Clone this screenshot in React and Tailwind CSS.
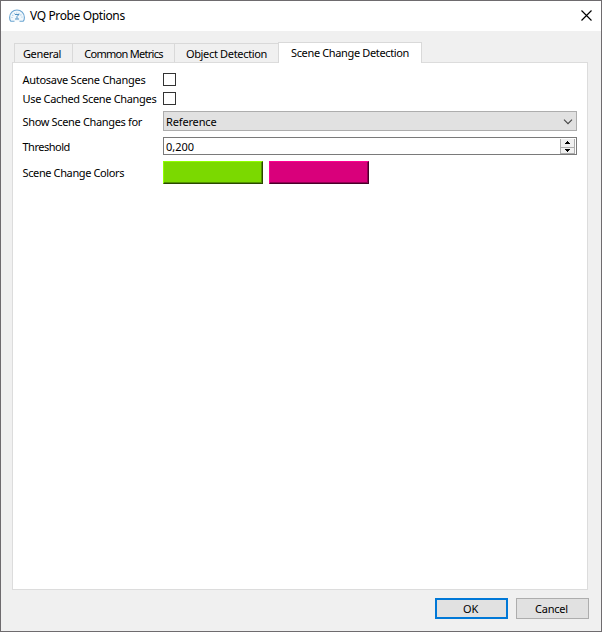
import React from 'react';

const tabs = [
    { name: 'General', style: 'w-[58px] tracking-[-0.35px] pr-[3px]' },
    { name: 'Common Metrics', style: 'w-[102px] tracking-[-0.72px]' },
    { name: 'Object Detection', style: 'w-[104px] tracking-[-0.33px]' },
];

const GaugeIcon = () => (
    <svg width="16" height="14" viewBox="0 0 16 14" fill="none" className="shrink-0">
        <path d="M1.7 12.3C.9 11 .6 9.8.6 8.4a7.4 7.4 0 0 1 14.8 0c0 1.400-.3 2.600-1.100 3.900" fill="#f2f8fc" stroke="#6ba5d1" strokeWidth="1.1" />
        <path d="M3 9A5 5 0 0 1 13 9" stroke="#a5cae4" strokeWidth="1.2" strokeDasharray="1 1.3" />
        <path d="M6 5.500h4L8 7.500v2M6 10h4" stroke="#4d8fc1" strokeWidth="1" />
        <path d="M1.500 12.300h4M10.500 12.300h4" stroke="#6ba5d1" strokeWidth="1.1" />
    </svg>
);

const CloseIcon = () => (
    <svg width="11" height="11" viewBox="0 0 11 11" className="shrink-0">
        <path d="M.5.5l10 10M10.5.5l-10 10" stroke="#000" strokeWidth="1.15" />
    </svg>
);

const Checkbox = () => (
    <span role="checkbox" aria-checked="false" className="block size-[13px] border border-[#333] bg-white" />
);

const Row = ({ label, className, labelStyle = '', children }) => (
    <div className={`flex items-center ${className}`}>
        <span className={`w-[141px] shrink-0 pl-[0.5px] ${labelStyle}`}>{label}</span>
        {children}
    </div>
);

const App = () => {
    return (
        <div className="flex h-[632px] w-[602px] flex-col border border-[#6e6b6e] bg-[#f0f0f0] font-['Noto_Sans','Open_Sans',sans-serif] text-[11px] leading-[14px] whitespace-nowrap text-black">
            {/* Title bar */}
            <header className="flex h-[30px] shrink-0 items-center bg-white pr-[9px] pb-px pl-2">
                <GaugeIcon />
                <h1 className="ml-[5px] pt-px text-[12px] leading-4 tracking-[-0.37px]">VQ Probe Options</h1>
                <button aria-label="Close" className="ml-auto"><CloseIcon /></button>
            </header>

            {/* Tabs */}
            <nav className="mt-[10px] flex h-[21px] shrink-0 items-end pl-[13px]">
                {tabs.map((tab) => (
                    <button
                        key={tab.name}
                        className={`h-[19px] border-t border-l border-[#d9d9d9] pt-px text-center ${tab.style}`}
                    >
                        {tab.name}
                    </button>
                ))}
                <button className="relative -mb-px h-[21px] w-[144px] border border-b-0 border-[#d9d9d9] bg-white text-center tracking-[-0.36px]">
                    Scene Change Detection
                </button>
            </nav>

            {/* Options */}
            <main className="mx-[11px] h-[528px] w-[576px] shrink-0 border border-[#dcdcdc] bg-white pt-[10px] pl-[9px]">
                <Row label="Autosave Scene Changes" className="h-[13px]" labelStyle="tracking-[-0.27px]"><Checkbox /></Row>
                <Row label="Use Cached Scene Changes" className="mt-[6px] h-[13px]" labelStyle="tracking-[-0.33px]"><Checkbox /></Row>
                <Row label="Show Scene Changes for" className="mt-[6px] h-5" labelStyle="pt-px tracking-[-0.34px]">
                    <div className="flex h-5 w-[414px] items-center justify-between border border-[#adadad] bg-[#e1e1e1] pr-[3px] pl-[2px]">
                        <span className="pt-px tracking-[-0.15px]">Reference</span>
                        <svg width="10" height="6" viewBox="0 0 10 6" fill="none" className="mt-[2px]">
                            <path d="M1 .7l4 4 4-4" stroke="#444" strokeWidth="1.1" />
                        </svg>
                    </div>
                </Row>
                <Row label="Threshold" className="mt-[6px] h-[18px]" labelStyle="pt-px tracking-[-0.5px]">
                    <div className="flex h-[18px] w-[414px] items-center justify-between border border-[#7a7a7a] bg-white pr-px pl-[2px]">
                        <span className="pt-px">0,200</span>
                        <div className="flex h-[15px] w-[15px] flex-col border border-t-0 border-[#adadad] bg-[#f0f0f0]">
                            <button className="flex h-[8px] items-center justify-center">
                                <svg width="5" height="3" viewBox="0 0 5 3"><path d="M2 0h1v1h1v1h1v1H0V2h1V1h1z" /></svg>
                            </button>
                            <button className="flex h-[6px] items-center justify-center border-t border-[#adadad]">
                                <svg width="5" height="3" viewBox="0 0 5 3"><path d="M0 0h5v1H4v1H3v1H2V2H1V1H0z" /></svg>
                            </button>
                        </div>
                    </div>
                </Row>
                <Row label="Scene Change Colors" className="mt-[6px] h-[23px]" labelStyle="tracking-[-0.38px]">
                    <button
                        aria-label="First color"
                        className="h-[23px] w-[100px] border border-t-[#91ff00] border-r-[#294800] border-b-[#294800] border-l-[#91ff00] bg-[#7bd900] shadow-[inset_-1px_-1px_0_#529100]"
                    />
                    <button
                        aria-label="Second color"
                        className="ml-[6px] h-[23px] w-[100px] border border-t-[#ff0091] border-r-[#480029] border-b-[#480029] border-l-[#ff0091] bg-[#d9007b] shadow-[inset_-1px_-1px_0_#910052]"
                    />
                </Row>
            </main>

            <footer className="mt-2 flex justify-end gap-2 pr-3">
                <button className="h-[21px] w-[73px] border-2 border-[#0078d7] bg-[#e1e1e1] pr-[2px] tracking-[-0.3px]">OK</button>
                <button className="h-[21px] w-[73px] border border-[#adadad] bg-[#e1e1e1] pr-[2px] tracking-[-0.2px]">Cancel</button>
            </footer>
        </div>
    );
};

export default App;
